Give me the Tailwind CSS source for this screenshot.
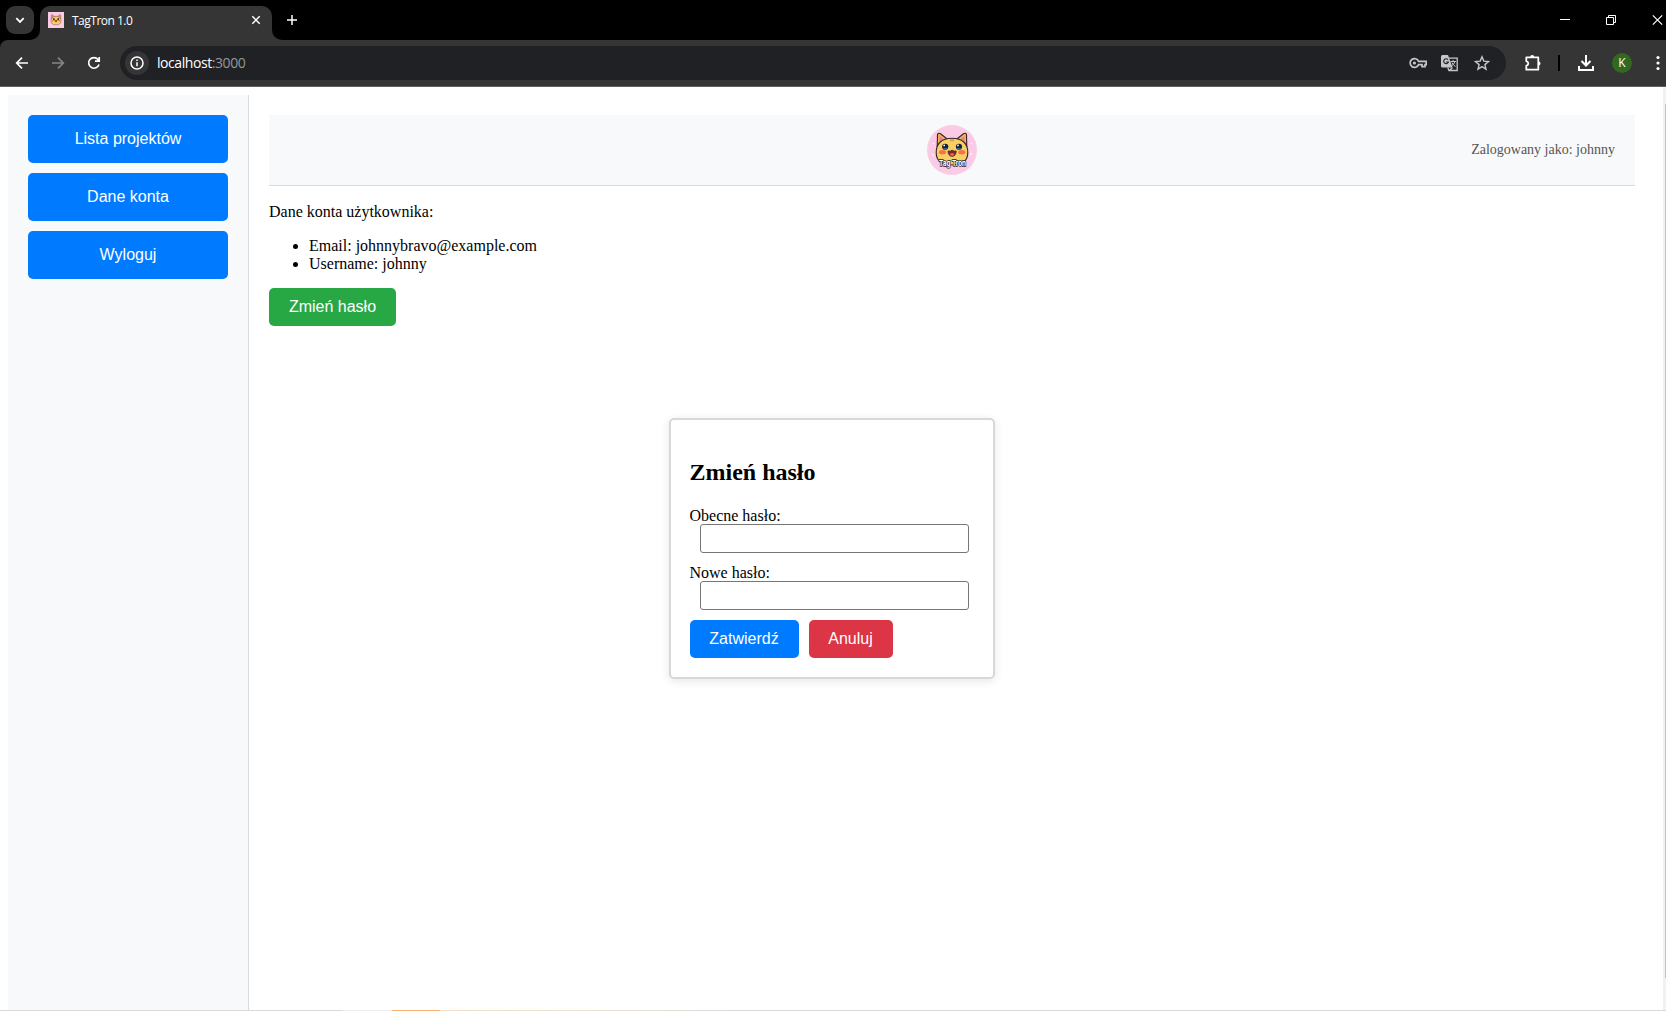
<!DOCTYPE html>
<html lang="pl">
<head>
<meta charset="utf-8">
<title>TagTron 1.0</title>
<script src="https://cdn.jsdelivr.net/npm/@tailwindcss/browser@4"></script>
</head>
<body class="bg-white text-black h-[1011px] overflow-hidden flex flex-col font-['Liberation_Serif',serif] text-base leading-[18px]">
<svg class="hidden">
  <symbol id="cat" viewBox="0 0 50 50">
    <rect width="50" height="50" fill="#fbcbe6"/>
    <path d="M5 29l2 2M43 30l2-2M6 18l1 1M44 19l1-1" stroke="#fff" stroke-width="1"/>
    <path d="M10.200 22L10.500 9.500q.8-2 3-.8l8 6.300M39.800 22L39.500 9.500q-.8-2-3-.8l-8 6.300" fill="#f3b552" stroke="#30232a" stroke-width="1.100"/>
    <path d="M12.400 16l.2-5 4.400 3.600zM37.600 16l-.2-5-4.400 3.600z" fill="#ef7890"/>
    <path d="M25 13.200C14.500 13.200 9.200 18.500 9.200 27.500c0 9 6 12.500 15.800 12.500s15.800-3.500 15.800-12.500c0-9-5.300-14.300-15.800-14.300z" fill="#f8cf62" stroke="#30232a" stroke-width="1.100"/>
    <path d="M24 14.200v2.200M26 14.200v2.200" stroke="#9b6234" stroke-width=".8"/>
    <circle cx="18.200" cy="21.800" r="3.100" fill="#172033"/><circle cx="32" cy="21.800" r="3.100" fill="#172033"/>
    <path d="M16.200 23.300a2.500 2.500 0 0 0 4.600 0zM29.700 23.300a2.500 2.500 0 0 0 4.600 0z" fill="#2b82b8"/>
    <circle cx="17.200" cy="20.400" r=".9" fill="#fff"/><circle cx="31" cy="20.400" r=".9" fill="#fff"/>
    <ellipse cx="15.500" cy="27.300" rx="3.500" ry="2.200" fill="#f9704c"/><ellipse cx="34.800" cy="27.300" rx="3.500" ry="2.200" fill="#f9704c"/>
    <path d="M21 26q2.400.6 4.100-.8 1.700 1.400 4.100.8-.3 5.300-4.100 5.300T21 26z" fill="#8d2026" stroke="#30232a" stroke-width=".8"/>
    <ellipse cx="25.100" cy="29.500" rx="2" ry="1.300" fill="#f46a63"/>
  </symbol>
</svg>

<!-- Tab strip -->
<header class="h-10 shrink-0 bg-black flex text-white font-['Open_Sans',sans-serif]">
  <div class="w-7 h-7 mt-1.5 ml-1.5 rounded-[9px] bg-[#353535] flex items-center justify-center">
    <svg class="w-3 h-3" viewBox="0 0 12 12" fill="none" stroke="#fff" stroke-width="1.800"><path d="M2.300 4.200L6 7.900l3.700-3.700"/></svg>
  </div>
  <div class="relative w-[232px] h-[34px] mt-1.5 ml-1.5 rounded-t-[10px] bg-[#353535] flex items-center pl-2 pr-2.5">
    <svg class="absolute -left-2.5 bottom-0 w-2.5 h-2.5" viewBox="0 0 10 10"><path d="M10 0v10H0A10 10 0 0 0 10 0" fill="#353535"/></svg>
    <svg class="absolute -right-2.5 bottom-0 w-2.5 h-2.5" viewBox="0 0 10 10"><path d="M0 0v10h10A10 10 0 0 1 0 0" fill="#353535"/></svg>
    <svg class="w-4 h-4 mb-1.5"><use href="#cat"/></svg>
    <span class="ml-2 mb-[5px] text-xs tracking-[-0.5px]">TagTron 1.0</span>
    <svg class="w-3 h-3 ml-auto mb-1.5" viewBox="0 0 12 12" fill="none" stroke="#fff" stroke-width="1.500"><path d="M2.300 2.300l7.400 7.400M9.700 2.300L2.300 9.700"/></svg>
  </div>
  <svg class="w-3 h-3 mt-3.5 ml-3.5" viewBox="0 0 12 12" fill="none" stroke="#fff" stroke-width="1.500"><path d="M6 1v10M1 6h10"/></svg>
  <div class="ml-auto flex pt-3.5 gap-[34px] w-[108px] pl-[2px]">
    <svg class="w-3 h-3 shrink-0" viewBox="0 0 12 12" shape-rendering="crispEdges"><path d="M0 5h10v1H0z" fill="#fff"/></svg>
    <svg class="w-3 h-3 shrink-0" viewBox="0 0 12 12" fill="none" stroke="#fff"><path d="M.5 3.500h7v7h-7zM2.500 3.500v-2h7v7h-2"/></svg>
    <svg class="w-3 h-3 shrink-0" viewBox="0 0 12 12" fill="none" stroke="#fff" stroke-width="1.200"><path d="M.8 1.300l9.400 9.400M10.200 1.300L.8 10.700"/></svg>
  </div>
</header>

<!-- Toolbar -->
<nav class="h-[47px] shrink-0 bg-black">
 <div class="h-full bg-[#353535] border-b border-[#606060] rounded-tl-lg flex items-center pl-[14px] font-['Open_Sans',sans-serif]">
  <svg class="w-4 h-4" viewBox="0 0 16 16" fill="none" stroke="#fff" stroke-width="1.700"><path d="M14 8H3M8 2.700L2.700 8 8 13.300"/></svg>
  <svg class="w-4 h-4 ml-5" viewBox="0 0 16 16" fill="none" stroke="#858585" stroke-width="1.700"><path d="M2 8h11M8 2.700L13.300 8 8 13.300"/></svg>
  <svg class="w-4 h-4 ml-5" viewBox="0 0 16 16" fill="none" stroke="#fff" stroke-width="1.700"><path d="M13 9.500A5.300 5.300 0 1 1 12 4.500l1 1.200M13.200 2v4.200H9"/></svg>
  <div class="w-[1386px] h-[34px] ml-[18px] rounded-full bg-[#202124] flex items-center pl-[5px] pr-4">
    <span class="w-6 h-6 rounded-full bg-[#353535] flex items-center justify-center">
      <svg class="w-[14px] h-[14px]" viewBox="0 0 14 14" fill="none" stroke="#fff" stroke-width="1.500"><circle cx="7" cy="7" r="6"/><path d="M7 6.200v4M7 3.500v1.400"/></svg>
    </span>
    <span class="ml-2 text-sm text-white tracking-[-0.43px]">localhost<span class="text-[#94979b]">:3000</span></span>
    <svg class="w-[18px] h-3 ml-auto" viewBox="0 0 18 12" fill="none" stroke="#c4c7c9" stroke-width="1.700"><path d="M9.600 4.300h7.600v3.400h-1.200v2h-3v-2H9.600A4.400 4.400 0 1 1 9.600 4.300z"/><circle cx="5.400" cy="6" r="1.600" fill="#c4c7c9" stroke="none"/></svg>
    <svg class="w-[18px] h-[18px] ml-[14px]" viewBox="0 0 18 18"><path d="M1.500 1H7l4.500 12.500h-10A1.500 1.500 0 0 1 0 12V2.500A1.500 1.500 0 0 1 1.500 1z" fill="#c4c7c9"/><path d="M8 4.200h8.200v12.300H8L6.800 13.700M8.500 16.500l3-3" fill="none" stroke="#c4c7c9" stroke-width="1.300"/><path d="M9.500 7.500h5.500M12.200 6v1.500M14 7.500q-1 3-3.500 4.500M10.800 8.500q1.500 2.800 3.700 4" fill="none" stroke="#c4c7c9"/><path d="M7 5.700A2.400 2.400 0 1 0 7.400 8H5.200" fill="none" stroke="#202124" stroke-width="1.100"/></svg>
    <svg class="w-4 h-4 ml-[15px]" viewBox="0 0 16 16" fill="none" stroke="#c4c7c9" stroke-width="1.400"><path d="M8 1.800l1.800 4.300 4.700.4-3.600 3.100 1.100 4.600L8 11.700l-4 2.500 1.100-4.600-3.600-3.100 4.700-.4z"/></svg>
  </div>
  <svg class="w-[18px] h-[18px] ml-[18px]" viewBox="0 0 18 18"><path d="M2.300 3.300h12v12.400h-12v-3.900q2-.6 2-2.300t-2-2.300z" fill="none" stroke="#fff" stroke-width="1.800" stroke-linejoin="round"/><path d="M6.200 3a2 2 0 0 1 4 0zM14.500 7.500a2 2 0 0 1 0 4z" fill="#fff"/></svg>
  <span class="w-0.5 h-4 ml-4 bg-black"></span>
  <svg class="w-[18px] h-[18px] ml-[17px]" viewBox="0 0 18 18" fill="none" stroke="#fff" stroke-width="2"><path d="M9 1v10M4.500 7L9 11.500 13.500 7M2 12v4h14v-4"/></svg>
  <span class="w-5 h-5 ml-[17px] rounded-full bg-[#33691e] text-white text-xs leading-5 text-center">K</span>
  <svg class="w-1 h-4 ml-[24px] shrink-0" viewBox="0 0 4 16" fill="#fff"><circle cx="2" cy="2.500" r="1.600"/><circle cx="2" cy="8" r="1.600"/><circle cx="2" cy="13.500" r="1.600"/></svg>
 </div>
</nav>

<!-- Page -->
<div class="relative flex flex-1 min-h-0">
  <aside class="w-[241px] mt-2 ml-2 p-5 flex flex-col gap-2.5 bg-[#f8f9fa] border-r border-[#d9dbdd] font-['Liberation_Sans',sans-serif]">
    <button class="h-12 rounded-[5px] bg-[#007bff] text-white">Lista projektów</button>
    <button class="h-12 rounded-[5px] bg-[#007bff] text-white">Dane konta</button>
    <button class="h-12 rounded-[5px] bg-[#007bff] text-white">Wyloguj</button>
  </aside>
  <main class="w-[1366px] ml-5 mt-7">
    <div class="h-[71px] bg-[#f8f9fa] border-b border-[#d9dbdd] grid grid-cols-3 items-center px-5">
      <svg class="col-start-2 justify-self-center w-[50px] h-[50px] rounded-full" viewBox="0 0 50 50"><use href="#cat"/><text x="25.500" y="41" text-anchor="middle" textLength="27" lengthAdjust="spacingAndGlyphs" font-family="Inter" font-weight="700" font-size="8" fill="#fff" stroke="#252027" stroke-width="1.400" paint-order="stroke">Tag Tron</text></svg>
      <span class="justify-self-end text-sm text-[#555]">Zalogowany jako: johnny</span>
    </div>
    <p class="mt-[17px]">Dane konta użytkownika:</p>
    <ul class="mt-4 pl-10 list-disc"><li>Email: johnnybravo@example.com</li><li>Username: johnny</li></ul>
    <button class="mt-[15px] w-[127px] h-[38px] rounded-[5px] bg-[#28a745] text-white font-['Liberation_Sans',sans-serif]">Zmień hasło</button>
  </main>

  <!-- Password dialog -->
  <section class="absolute left-[669px] top-[331px] w-[326px] h-[261px] py-5 pl-[18.5px] bg-white border-2 border-[#d8d8d8] rounded-[5px] shadow-[0_2px_10px_rgba(0,0,0,0.1)]">
    <h2 class="mt-[19px] text-2xl leading-[27px] font-bold">Zmień hasło</h2>
    <label class="block mt-5 pt-0.5 leading-4">Obecne hasło:</label>
    <input type="password" class="block ml-2.5 w-[269px] h-[29px] border border-[#767676] rounded-[3px] bg-white">
    <label class="block mt-2.5 pt-0.5 leading-4">Nowe hasło:</label>
    <input type="password" class="block ml-2.5 w-[269px] h-[29px] border border-[#767676] rounded-[3px] bg-white">
    <div class="mt-[9.500px] flex gap-2.5 text-white font-['Liberation_Sans',sans-serif]">
      <button class="w-[109px] h-[38px] rounded-[5px] bg-[#007bff]">Zatwierdź</button>
      <button class="w-[84px] h-[38px] rounded-[5px] bg-[#dc3545]">Anuluj</button>
    </div>
  </section>

  <div class="w-[3px] ml-auto bg-[#f1f1f1] flex justify-end pt-[17px]"><div class="w-px h-[874px] bg-[#c1c1c1]"></div></div>
</div>
<footer class="h-px shrink-0 flex bg-[#d8dadc]"><i class="ml-[343px] w-[49px] bg-[#eee]"></i><i class="w-12 bg-[#fdb274]"></i><i class="w-[290px] bg-linear-to-r from-[#f3dfce] via-[#ece3cf] to-[#dbdbdb]"></i></footer>
</body>
</html>
